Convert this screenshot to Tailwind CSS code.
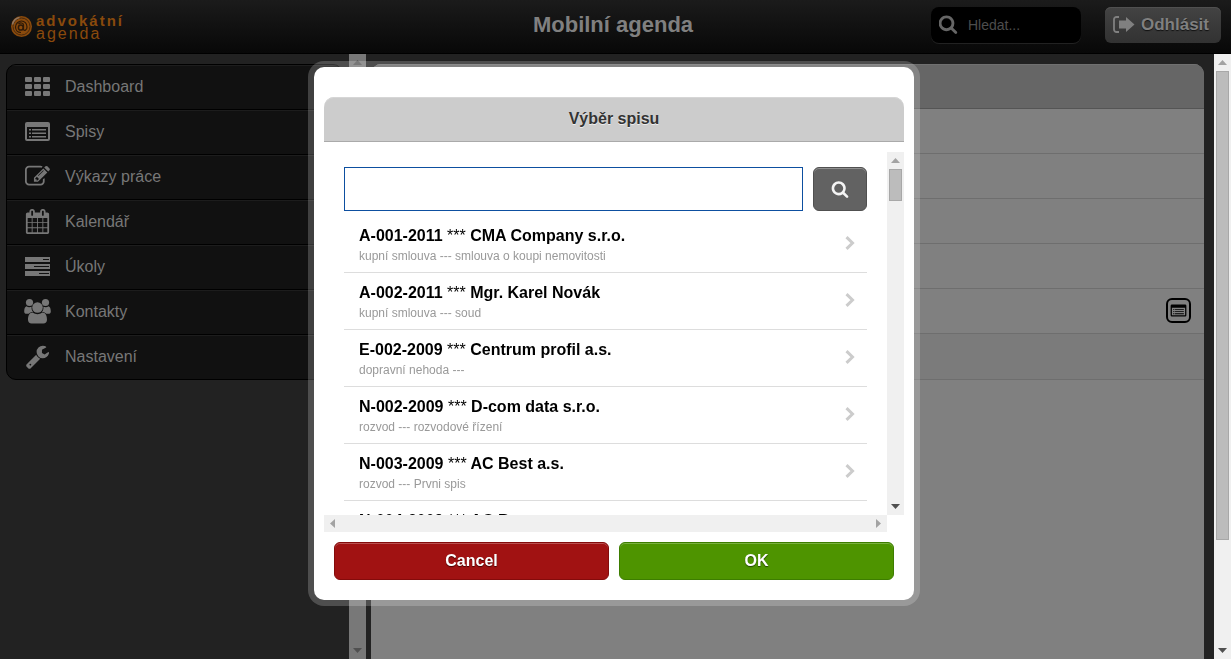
<!DOCTYPE html>
<html lang="cs">

<head>
    <meta charset="UTF-8">
    <meta name="viewport" content="width=device-width, initial-scale=1.0">
    <script src="https://cdn.jsdelivr.net/npm/@tailwindcss/browser@4"></script>
    <title>Mobilní agenda</title>
</head>

<body class="flex h-screen flex-col overflow-hidden bg-[#222] font-['Liberation_Sans',Arial,sans-serif] text-base">
    <svg class="hidden">
        <symbol id="icon-th" viewBox="0 0 27 27">
            <rect x="1" y="4" width="7" height="5" rx="1" /><rect x="10" y="4" width="7" height="5" rx="1" /><rect x="19" y="4" width="7" height="5" rx="1" />
            <rect x="1" y="11" width="7" height="5" rx="1" /><rect x="10" y="11" width="7" height="5" rx="1" /><rect x="19" y="11" width="7" height="5" rx="1" />
            <rect x="1" y="18" width="7" height="5" rx="1" /><rect x="10" y="18" width="7" height="5" rx="1" /><rect x="19" y="18" width="7" height="5" rx="1" />
        </symbol>
        <symbol id="icon-list" viewBox="0 0 27 27">
            <path fill-rule="evenodd" d="M3 4h21a2 2 0 0 1 2 2v15a2 2 0 0 1-2 2H3a2 2 0 0 1-2-2V6a2 2 0 0 1 2-2zM3 9v12h21V9z" />
            <path d="M5 11h2v1.500H5zM8 11h14v1.500H8zM5 14.500h2V16H5zM8 14.500h14V16H8zM5 18h2v1.500H5zM8 18h14v1.500H8z" />
        </symbol>
        <symbol id="icon-edit" viewBox="0 0 1792 1792">
            <path d="M888 1184l116-116-152-152-116 116v56h96v96h56zm440-720q-16-16-33 1l-350 350q-17 17-1 33t33-1l350-350q17-17 1-33zm80 594v190q0 119-84.500 203.500t-203.500 84.500h-832q-119 0-203.500-84.500t-84.500-203.500v-832q0-119 84.500-203.500t203.500-84.500h832q63 0 117 25 15 7 18 23 3 17-9 29l-49 49q-14 14-32 8-23-6-45-6h-832q-66 0-113 47t-47 113v832q0 66 47 113t113 47h832q66 0 113-47t47-113v-126q0-13 9-22l64-64q15-15 35-7t20 29zm-96-738l288 288-672 672h-288v-288zm444 132l-92 92-288-288 92-92q28-28 68-28t68 28l152 152q28 28 28 68t-28 68z" />
        </symbol>
        <symbol id="icon-calendar" viewBox="0 0 1792 1792">
            <path d="M192 1664h288v-288h-288v288zm352 0h320v-288h-320v288zm-352-352h288v-320h-288v320zm352 0h320v-320h-320v320zm-352-384h288v-288h-288v288zm736 736h320v-288h-320v288zm-384-736h320v-288h-320v288zm768 736h288v-288h-288v288zm-384-352h320v-320h-320v320zm-352-864v-288q0-13-9.500-22.500t-22.500-9.500h-64q-13 0-22.500 9.500t-9.500 22.500v288q0 13 9.500 22.500t22.500 9.500h64q13 0 22.500-9.500t9.500-22.500zm736 864h288v-320h-288v320zm-384-384h320v-288h-320v288zm384 0h288v-288h-288v288zm32-480v-288q0-13-9.500-22.500t-22.500-9.500h-64q-13 0-22.500 9.500t-9.500 22.500v288q0 13 9.500 22.500t22.500 9.500h64q13 0 22.500-9.500t9.500-22.500zm384-64v1280q0 52-38 90t-90 38h-1408q-52 0-90-38t-38-90v-1280q0-52 38-90t90-38h128v-96q0-66 47-113t113-47h64q66 0 113 47t47 113v96h384v-96q0-66 47-113t113-47h64q66 0 113 47t47 113v96h128q52 0 90 38t38 90z" />
        </symbol>
        <symbol id="icon-tasks" viewBox="0 0 27 27">
            <path fill-rule="evenodd" d="M1 4h25v5H1zM19 6v1h6V6zM1 11h25v5H1zM10 13v1h15v-1zM1 18h25v5H1zM15 20v1h10v-1z" />
        </symbol>
        <symbol id="icon-users" viewBox="0 0 27 27">
            <circle cx="5.500" cy="4.500" r="3.600" /><circle cx="21.500" cy="4.500" r="3.600" />
            <path d="M2.500 8.300C4 9.500 6 9.300 7.600 8.700c-.3 2 .3 4 1.500 5.400-2 0-3.300.6-4.300 1.700H2.600C1 15.800.2 15 .2 13.500c0-2.500.6-4.700 2.300-5.200zM24.500 8.300c-1.500 1.200-3.500 1-5.100.4.300 2-.3 4-1.500 5.400 2 0 3.300.6 4.300 1.700h2.200c1.600 0 2.400-.8 2.400-2.300 0-2.500-.6-4.700-2.300-5.200z" />
            <circle cx="13.500" cy="9.500" r="5.300" />
            <path d="M8.800 14.500c2.800 2.200 6.600 2.200 9.400 0 3.600 0 4.800 3.500 4.800 7.200 0 2.300-1.400 3.800-3.700 3.800H7.700C5.400 25.500 4 24 4 21.700c0-3.700 1.200-7.200 4.800-7.200z" />
        </symbol>
        <symbol id="icon-wrench" viewBox="0 0 1792 1792">
            <path d="M448 1472q0-26-19-45t-45-19-45 19-19 45 19 45 45 19 45-19 19-45zm644-420l-682 682q-37 37-90 37-52 0-91-37l-106-108q-38-36-38-90 0-53 38-91l681-681q39 98 114.500 173.500t173.500 114.500zm634-435q0 39-23 106-47 134-164.500 217.500t-258.500 83.500q-185 0-316.500-131.500t-131.500-316.500 131.500-316.500 316.500-131.500q58 0 121.500 16.500t107.500 46.500q16 11 16 28t-16 28l-293 169v224l193 107q5-3 79-48.500t135.500-81 70.500-35.500q15 0 23.500 10t8.500 25z" />
        </symbol>
        <symbol id="icon-search" viewBox="0 0 1792 1792">
            <path d="M1216 832q0-185-131.500-316.500t-316.500-131.500-316.500 131.500-131.500 316.500 131.500 316.500 316.500 131.500 316.500-131.500 131.500-316.500zm512 832q0 52-38 90t-90 38q-54 0-90-38l-343-342q-179 124-399 124-143 0-273.500-55.500t-225-150-150-225-55.500-273.500 55.500-273.500 150-225 225-150 273.500-55.500 273.500 55.500 225 150 150 225 55.500 273.500q0 220-124 399l343 343q37 37 37 90z" />
        </symbol>
        <symbol id="icon-chevron" viewBox="0 0 10 14">
            <path d="M1.500 1.200L7.500 7 1.500 12.800" fill="none" stroke="currentColor" stroke-width="3" />
        </symbol>
    </svg>

    <header class="grid h-[54px] shrink-0 grid-cols-[1fr_auto_1fr] items-center border-b border-black bg-linear-to-b from-[#1b1b1b] to-[#080808] pl-[5px] pr-[10px]">
        <a href="#" class="flex items-center gap-1 pl-[6px] text-[#8a4a0c]">
            <svg class="size-[21px]" viewBox="0 0 21 21" fill="none">
                <circle cx="10.500" cy="10.500" r="10.500" fill="#8a4a0c" />
                <circle cx="10.500" cy="10.500" r="8.500" stroke="#4a2a0c" stroke-width="1" />
                <ellipse cx="9.800" cy="11.500" rx="2.400" ry="2.600" stroke="#2e1a08" stroke-width="1.500" />
                <path d="M7.500 8c1.500-1.500 5-1.500 5 1v4.500c.5 1.500 3.500 1 3.500-2.500C16 7.500 13.500 5 10.500 5S4.500 7.700 4.500 11s2.500 5.500 5.500 5.500" stroke="#2e1a08" stroke-width="1.200" />
                <path d="M1.500 8.500a9 9 0 0 1 7-7" stroke="#8f7660" stroke-width="1.500" />
            </svg>
            <span class="flex flex-col tracking-[2px]">
                <b class="text-[15px] leading-[13px]">advokátní</b>
                <span class="text-base leading-[13px]">agenda</span>
            </span>
        </a>
        <h1 class="pb-1 text-[22px] font-bold text-[#808080]">Mobilní agenda</h1>
        <div class="flex items-center justify-end gap-6 pb-1">
            <label class="flex h-[36px] w-[150px] items-center gap-[9px] rounded-lg bg-black pl-2 shadow-[0_1px_0_#222]">
                <svg class="mb-px size-[20px] shrink-0 fill-[#666]" viewBox="96 0 1792 1792"><use href="#icon-search" width="1792" height="1792" /></svg>
                <input type="search" placeholder="Hledat..." aria-label="Hledat" class="w-full min-w-0 bg-transparent text-sm text-[#808080] outline-none placeholder:text-[#4d4d4d]">
            </label>
            <button class="flex h-[36px] items-center gap-[6px] rounded-md bg-linear-to-b from-[#434343] to-[#323232] px-2 pr-3 text-[17px] font-bold text-[#808080] shadow-[inset_0_1px_0_#505050] text-shadow-[0_1px_1px_#111]">
                <svg class="h-[18px] w-[22px]" viewBox="0 0 22 18">
                    <path d="M6 1H3.500A2.500 2.500 0 0 0 1 3.500v10A2.500 2.500 0 0 0 3.500 16H6" fill="none" stroke="#808080" stroke-width="1.800" />
                    <path d="M6 4.500h7V1l8.500 7.500L13 16v-3.500H6z" fill="#808080" />
                </svg>
                Odhlásit
            </button>
        </div>
    </header>

    <div class="flex min-h-0 flex-1">
        <aside class="flex w-[366px] shrink-0">
            <nav class="flex-1 px-[6px] pt-[10px]">
                <ul class="divide-y divide-black overflow-hidden rounded-[10px] border border-black bg-[#111] text-[#777]">
                    <li><a href="#" class="flex h-11 items-center gap-[14px] border-t border-[#1d1d1d] pb-[2px] pl-[17px]"><svg class="size-[27px] fill-[#777]"><use href="#icon-th" /></svg>Dashboard</a></li>
                    <li><a href="#" class="flex h-11 items-center gap-[14px] border-t border-[#1d1d1d] pb-[2px] pl-[17px]"><svg class="size-[27px] fill-[#777]"><use href="#icon-list" /></svg>Spisy</a></li>
                    <li><a href="#" class="flex h-11 items-center gap-[14px] border-t border-[#1d1d1d] pb-[2px] pl-[17px]"><svg class="h-[25px] w-[27px] fill-[#777]"><use href="#icon-edit" /></svg>Výkazy práce</a></li>
                    <li><a href="#" class="flex h-11 items-center gap-[14px] border-t border-[#1d1d1d] pb-[2px] pl-[17px]"><svg class="h-[25px] w-[27px] fill-[#777]"><use href="#icon-calendar" /></svg>Kalendář</a></li>
                    <li><a href="#" class="flex h-11 items-center gap-[14px] border-t border-[#1d1d1d] pb-[2px] pl-[17px]"><svg class="size-[27px] fill-[#777]"><use href="#icon-tasks" /></svg>Úkoly</a></li>
                    <li><a href="#" class="flex h-11 items-center gap-[14px] border-t border-[#1d1d1d] pb-[2px] pl-[17px]"><svg class="size-[27px] fill-[#777]"><use href="#icon-users" /></svg>Kontakty</a></li>
                    <li><a href="#" class="flex h-11 items-center gap-[14px] border-t border-[#1d1d1d] pb-[2px] pl-[17px]"><svg class="h-[25px] w-[27px] fill-[#777]"><use href="#icon-wrench" /></svg>Nastavení</a></li>
                </ul>
            </nav>
            <div class="flex w-[17px] flex-col items-center justify-between bg-[#787878] py-[6px]">
                <svg class="h-[5px] w-[9px] fill-[#555]" viewBox="0 0 9 5"><path d="M0 5L4.500 0 9 5z" /></svg>
                <svg class="h-[5px] w-[9px] fill-[#505050]" viewBox="0 0 9 5"><path d="M0 0l4.500 5L9 0z" /></svg>
            </div>
        </aside>

        <main class="ml-[5px] mr-[10px] flex-1 pt-[10px]">
            <div class="h-full overflow-hidden rounded-t-[10px] bg-[#808080]">
                <div class="h-[45px] border-b border-[#555] bg-[#666] shadow-[inset_0_1px_0_#707070]"></div>
                <div class="h-[45px] border-b border-[#6e6e6e]"></div>
                <div class="h-[45px] border-b border-[#6e6e6e]"></div>
                <div class="h-[45px] border-b border-[#6e6e6e]"></div>
                <div class="h-[45px] border-b border-[#6e6e6e]"></div>
                <div class="flex h-[45px] items-center justify-end border-b border-[#6e6e6e] pb-px pr-[13px]">
                    <button aria-label="Vybrat spis" class="flex size-[25px] items-center justify-center rounded-md border-2 border-black">
                        <svg class="size-[17px]"><use href="#icon-list" /></svg>
                    </button>
                </div>
                <div class="h-[46px] border-b border-[#6e6e6e] bg-[#7b7b7b]"></div>
            </div>
        </main>

        <div class="flex w-[17px] shrink-0 flex-col items-center bg-[#f0f0f0] py-[6px]">
            <svg class="h-[5px] w-[9px] shrink-0 fill-[#a3a3a3]" viewBox="0 0 9 5"><path d="M0 5L4.500 0 9 5z" /></svg>
            <div class="mt-[6px] h-[469px] w-[13px] border border-[#a8a8a8] bg-[#bcbcbc]"></div>
            <svg class="mt-auto h-[5px] w-[9px] shrink-0 fill-[#505050]" viewBox="0 0 9 5"><path d="M0 0l4.500 5L9 0z" /></svg>
        </div>
    </div>

    <div class="fixed inset-0 flex items-start justify-center pr-[3px] pt-[67px]">
        <div role="dialog" aria-labelledby="dialog-title" class="w-full max-w-[600px] rounded-[10px] bg-white px-[10px] pb-5 pt-[30px] ring-6 ring-white/20">
            <h2 id="dialog-title" class="flex h-[45px] items-center justify-center rounded-t-[10px] border-b border-[#aaa] bg-[#ccc] font-bold text-[#333] shadow-[inset_0_1px_0_#d6d6d6] text-shadow-[0_1px_0_#eee]">Výběr spisu</h2>

            <div class="mt-[10px] grid grid-cols-[1fr_17px] grid-rows-[363px_17px]">
                <div class="overflow-hidden px-5 pt-[15px]">
                    <form class="flex gap-[10px]">
                        <input type="text" aria-label="Hledat spis" class="h-[44px] min-w-0 flex-1 border border-[#0d4fa0] bg-white px-2 outline-none">
                        <button type="button" aria-label="Hledat" class="flex h-[44px] w-[54px] items-center justify-center rounded-md border border-[#505050] bg-[#626262] shadow-[inset_0_1px_0_#909090]">
                            <svg class="mb-px size-[18px] fill-[#f4f4f4]"><use href="#icon-search" /></svg>
                        </button>
                    </form>
                    <ul class="mt-[5px]" id="files"></ul>
                </div>
                <div class="flex flex-col items-center bg-[#f0f0f0] py-[6px]">
                    <svg class="h-[5px] w-[9px] fill-[#a3a3a3]" viewBox="0 0 9 5"><path d="M0 5L4.500 0 9 5z" /></svg>
                    <div class="mt-[6px] h-[32px] w-[13px] border border-[#a8a8a8] bg-[#bcbcbc]"></div>
                    <svg class="mt-auto h-[5px] w-[9px] fill-[#505050]" viewBox="0 0 9 5"><path d="M0 0l4.500 5L9 0z" /></svg>
                </div>
                <div class="flex items-center justify-between bg-[#f0f0f0] px-[6px]">
                    <svg class="h-[9px] w-[5px] fill-[#a3a3a3]" viewBox="0 0 5 9"><path d="M5 0L0 4.500 5 9z" /></svg>
                    <svg class="h-[9px] w-[5px] fill-[#a3a3a3]" viewBox="0 0 5 9"><path d="M0 0l5 4.500L0 9z" /></svg>
                </div>
            </div>

            <div class="mt-[10px] grid grid-cols-2 gap-[10px] px-[10px]">
                <button class="h-[38px] rounded-md border border-[#840b0b] bg-[#a11212] pb-px font-bold text-white shadow-[inset_0_1px_0_#b95050] text-shadow-[0_1px_1px_#400]">Cancel</button>
                <button class="h-[38px] rounded-md border border-[#3d7d00] bg-[#4e9400] pb-px font-bold text-white shadow-[inset_0_1px_0_#7ab040] text-shadow-[0_1px_1px_#240]">OK</button>
            </div>
        </div>
    </div>

    <script>
        const files = [
            { number: 'A-001-2011', client: 'CMA Company s.r.o.', note: 'kupní smlouva --- smlouva o koupi nemovitosti' },
            { number: 'A-002-2011', client: 'Mgr. Karel Novák', note: 'kupní smlouva --- soud' },
            { number: 'E-002-2009', client: 'Centrum profil a.s.', note: 'dopravní nehoda ---' },
            { number: 'N-002-2009', client: 'D-com data s.r.o.', note: 'rozvod --- rozvodové řízení' },
            { number: 'N-003-2009', client: 'AC Best a.s.', note: 'rozvod --- Prvni spis' },
            { number: 'N-004-2009', client: 'AC Best', note: '' },
        ];

        document.getElementById('files').innerHTML = files.map((file) => `
            <li>
                <a href="#" class="flex h-[57px] items-start justify-between border-b border-[#ddd] pl-[15px] pr-3 pt-[10px]">
                    <span>
                        <span class="block font-bold leading-5 text-black">${file.number} <span class="font-normal">***</span> ${file.client}</span>
                        <span class="block text-xs leading-5 text-[#999]">${file.note}</span>
                    </span>
                    <svg class="mt-[10px] h-[14px] w-[10px] text-[#ccc]"><use href="#icon-chevron" /></svg>
                </a>
            </li>`).join('');
    </script>
</body>

</html>
